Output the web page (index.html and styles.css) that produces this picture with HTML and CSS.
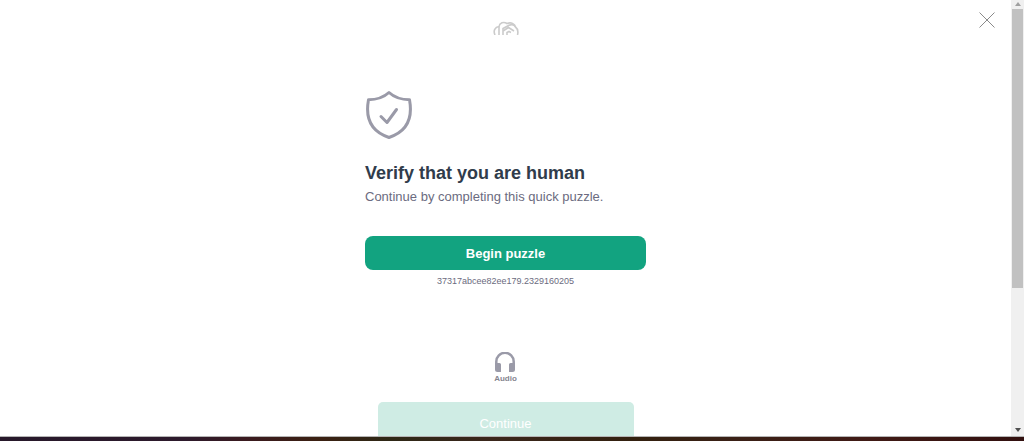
FILE: index.html
```
<!DOCTYPE html>
<html lang="en">
<head>
<meta charset="utf-8">
<meta name="viewport" content="width=device-width, initial-scale=1">
<title>Verify that you are human</title>
<link rel="stylesheet" href="styles.css">
</head>
<body>
<div class="window">
  <main class="page">
    <button class="close" type="button" aria-label="Close">
      <svg viewBox="0 0 16 16" width="16" height="16" aria-hidden="true"><path d="M.5.5l15 15M15.5.5l-15 15"/></svg>
    </button>
    <svg class="logo" viewBox="0 0 26 14" width="26" height="14" aria-hidden="true">
      <path d="M2 14C0 10 2 6 6 5.500C6.500 2 10.500.2 14 2.500C18 1 22 2.500 22.500 6C24.500 7.500 25.500 10 24.500 14"/>
      <path d="M6 5.500V14M10 14V7.500L16 4.300C19 3 21.500 4 22.500 6M10 10L15.500 6.500L21 10M14 14V11.500L16 10.500L18 11.500"/>
    </svg>
    <section class="verify">
      <svg class="shield" viewBox="0 0 48 50" width="48" height="50" aria-hidden="true">
        <path d="M24 2.500C18.500 7.500 12 9.700 3.500 9.700C.5 26 4 41 24 47.500C44 41 47.500 26 44.500 9.700C36 9.700 29.500 7.500 24 2.500Z"/>
        <path d="M16 26.500L22 32.500L31.500 19.500"/>
      </svg>
      <h1 class="title">Verify that you are human</h1>
      <p class="lead">Continue by completing this quick puzzle.</p>
      <button class="begin" type="button">Begin puzzle</button>
      <p class="session">37317abcee82ee179.2329160205</p>
    </section>
    <button class="audio" type="button">
      <svg viewBox="0 0 20 20" width="20" height="20" aria-hidden="true">
        <path class="band" d="M1.300 13V9.500a8.700 8.700 0 0 1 17.400 0V13"/>
        <path class="cup" d="M0 11h4.500a1.500 1.500 0 0 1 1.500 1.500V20H2.500A2.500 2.500 0 0 1 0 17.500zM20 11h-4.500a1.500 1.500 0 0 0-1.500 1.500V20h3.500a2.500 2.500 0 0 0 2.500-2.500z"/>
      </svg>
      Audio
    </button>
    <button class="continue" type="button" disabled>Continue</button>
  </main>
  <div class="scrollbar" aria-hidden="true">
    <svg class="arrow up" viewBox="0 0 6 4" width="6" height="4"><path d="M0 4L3 0L6 4Z"/></svg>
    <div class="track"><div class="thumb"></div></div>
    <svg class="arrow down" viewBox="0 0 6 4" width="6" height="4"><path d="M0 0L3 4L6 0Z"/></svg>
  </div>
</div>
<div class="taskbar"></div>
</body>
</html>
```
FILE: styles.css
```
* {
  box-sizing: border-box;
}

body {
  display: flex;
  flex-direction: column;
  height: 100vh;
  margin: 0;
  overflow: hidden;
  background: #fff;
  font-family: "Liberation Sans", Arial, sans-serif;
}

button {
  padding: 0;
  border: 0;
  background: none;
  font-family: inherit;
}

.window {
  display: flex;
  flex: 1;
  min-height: 0;
  border-bottom: 1px solid #b5b5b5;
}

.page {
  position: relative;
  display: flex;
  flex: 1;
  flex-direction: column;
  align-items: center;
  min-width: 0;
  padding-top: 21px;
  overflow: hidden;
}

.page > * {
  flex-shrink: 0;
}

.close {
  position: absolute;
  top: 12px;
  right: 16px;
  height: 16px;
}

.close svg {
  display: block;
  fill: none;
  stroke: #8a8a8a;
}

.logo {
  fill: none;
  stroke: #cbcbcb;
  stroke-width: 1.6;
}

.verify {
  display: flex;
  flex-direction: column;
  width: 100%;
  max-width: 281px;
  margin-top: 55px;
}

.shield {
  fill: none;
  stroke: #9a9aa8;
  stroke-width: 3;
  stroke-linecap: round;
  stroke-linejoin: round;
}

.title {
  margin: 21px 0 0;
  color: #303c4b;
  font-size: 18px;
  line-height: 24px;
  white-space: nowrap;
}

.lead {
  margin: 2px 0 0;
  color: #6b6b80;
  font-size: 13px;
  line-height: 20px;
  white-space: nowrap;
}

.begin {
  height: 34px;
  margin-top: 29px;
  border-radius: 8px;
  background: #12a380;
  color: #fff;
  font-size: 13px;
  font-weight: bold;
}

.session {
  margin: 4px 0 0;
  color: #6b6b80;
  font-size: 9px;
  line-height: 14px;
  text-align: center;
}

.audio {
  display: flex;
  flex-direction: column;
  align-items: center;
  gap: 2px;
  margin-top: 64px;
  color: #85858f;
  font-size: 8px;
  font-weight: bold;
  line-height: 10px;
}

.band {
  fill: none;
  stroke: #9a9aa8;
  stroke-width: 2.5;
}

.cup {
  fill: #9a9aa8;
}

.continue {
  width: 100%;
  max-width: 256px;
  height: 42px;
  margin-top: 18px;
  border-radius: 5px;
  background: #cfece4;
  color: #fff;
  font-size: 13px;
}

.scrollbar {
  display: flex;
  flex-direction: column;
  align-items: center;
  width: 13px;
  padding: 2px 1px 4px;
  background: #f0f0f0;
}

.arrow {
  fill: #505050;
}

.up {
  fill: #a0a0a0;
}

.track {
  flex: 1;
  width: 100%;
  padding-top: 3px;
}

.thumb {
  height: 66.5%;
  background: #c1c1c1;
}

.taskbar {
  height: 4px;
  background: linear-gradient(90deg, #27182a 0%, #2d1a2c 18%, #3a1a1f 24%, #3b2012 31%, #2e2816 38%, #3a261b 48%, #33200f 62%, #3a2016 72%, #401a15 85%, #32100f 100%);
}
```
